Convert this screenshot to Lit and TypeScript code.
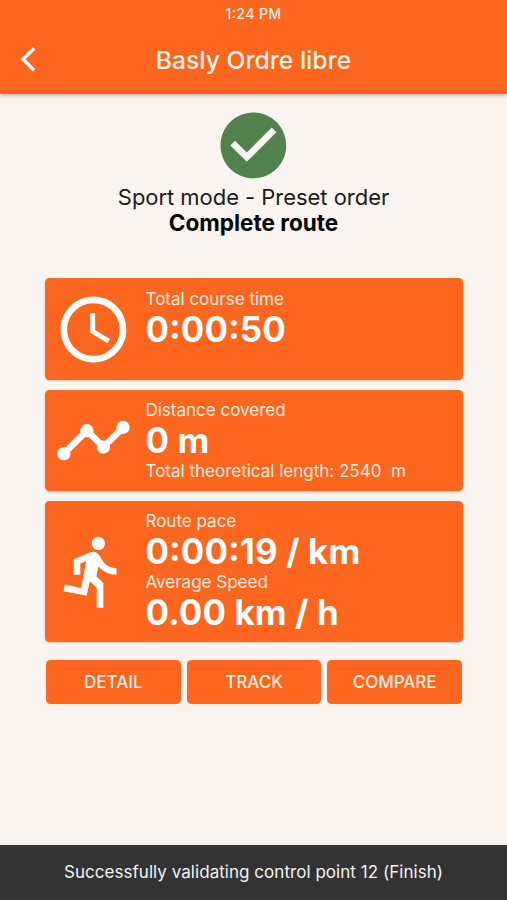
import { LitElement, html, css, svg } from "lit";
import { customElement } from "lit/decorators.js";

const ICONS = {
  back: "M11.67 3.87L9.9 2.1 0 12l9.9 9.9 1.77-1.77L3.54 12z",
  check: "M12 2C6.48 2 2 6.48 2 12s4.48 10 10 10 10-4.48 10-10S17.52 2 12 2zm-2 15l-5-5 1.41-1.41L10 14.17l7.59-7.59L19 8l-9 9z",
  clock: "M11.99 2C6.47 2 2 6.48 2 12s4.47 10 9.99 10C17.52 22 22 17.52 22 12S17.52 2 11.99 2zM12 20c-4.42 0-8-3.58-8-8s3.58-8 8-8 8 3.58 8 8-3.58 8-8 8zM12.5 7H11v6l5.25 3.15.75-1.23-4.5-2.67z",
  timeline: "M23 8c0 1.1-.9 2-2 2-.18 0-.35-.02-.51-.07l-3.56 3.55c.05.16.07.34.07.52 0 1.1-.9 2-2 2s-2-.9-2-2c0-.18.02-.36.07-.52l-2.55-2.55c-.16.05-.34.07-.52.07s-.36-.02-.52-.07l-4.55 4.56c.05.16.07.33.07.51 0 1.1-.9 2-2 2s-2-.9-2-2 .9-2 2-2c.18 0 .35.02.51.07l4.56-4.55C8.02 9.36 8 9.18 8 9c0-1.1.9-2 2-2s2 .9 2 2c0 .18-.02.36-.07.52l2.55 2.55c.16-.05.34-.07.52-.07s.36.02.52.07l3.55-3.56C19.02 8.35 19 8.18 19 8c0-1.1.9-2 2-2s2 .9 2 2z",
  run: "M13.49 5.48c1.1 0 2-.9 2-2s-.9-2-2-2-2 .9-2 2 .9 2 2 2zm-3.6 13.9l1-4.4 2.1 2v6h2v-7.5l-2.1-2 .6-3c1.3 1.5 3.3 2.5 5.5 2.5v-2c-1.9 0-3.5-1-4.3-2.4l-1-1.6c-.4-.6-1-1-1.7-1-.3 0-.5.1-.8.1l-5.2 2.2v4.7h2v-3.4l1.8-.7-1.6 8.1-4.9-1-.4 2 7 1.4z",
};

const icon = (name: keyof typeof ICONS, cls: string) =>
  html`<svg class=${cls} viewBox="0 0 24 24" aria-hidden="true">${svg`<path d=${ICONS[name]} fill="currentColor"></path>`}</svg>`;

@customElement("app-root")
export class AppRoot extends LitElement {
  static styles = css`
    :host {
      display: flex;
      flex-direction: column;
      height: 900px;
      background: #f9f4ef;
      font-family: Inter, "Liberation Sans", sans-serif;
      color: #111;
      overflow: hidden;
    }
    svg { display: block; flex: none; }
    .top {
      height: 94px;
      background: #fd661f;
      color: #fff4e8;
      box-shadow: 0 1px 4px rgba(0, 0, 0, 0.35);
    }
    .status {
      height: 28px;
      line-height: 28px;
      text-align: center;
      font-size: 14px;
      font-weight: 500;
      letter-spacing: 0.4px;
    }
    .bar {
      display: grid;
      grid-template-columns: 60px 1fr 60px;
      align-items: center;
      height: 63px;
    }
    .back {
      width: 28.7px;
      height: 28.7px;
      margin-left: 20.7px;
      color: #fff;
      stroke: #fff;
      stroke-width: 0.4;
      overflow: visible;
    }
    .title { text-align: center; font-size: 24.6px; font-weight: 500; letter-spacing: 0.04px; }
    .summary {
      display: flex;
      flex-direction: column;
      align-items: center;
      padding-top: 12px;
      font-size: 22px;
      line-height: 26px;
    }
    .big-check { width: 78.8px; height: 78.8px; margin: 0 0 -0.8px 0.6px; color: #528150; }
    .done { font-size: 22.5px; font-weight: 700; color: #000; }
    .mode { color: #1c1c1c; letter-spacing: -0.04px; }
    .cards {
      display: flex;
      flex-direction: column;
      gap: 9.7px;
      margin: 42.4px 44px 0 45px;
    }
    .card {
      display: flex;
      align-items: center;
      height: 101.5px;
      border-radius: 4.5px;
      background: #fd661f;
      color: #fff;
      box-shadow: 0 1px 2px rgba(0, 0, 0, 0.2);
    }
    .card.tall { height: 141.5px; }
    .glyph { width: 79px; height: 79px; margin: 0 12.2px 0 9.3px; }
    .body { align-self: flex-start; padding-top: 9.5px; white-space: pre; }
    .label { font-size: 17px; line-height: 22px; color: #fff0e2; }
    .value { font-size: 34.8px; line-height: 39px; font-weight: 700; letter-spacing: 0.14px; }
    .time { font-feature-settings: "case"; }
    .actions {
      display: grid;
      grid-template-columns: repeat(3, 1fr);
      gap: 6px;
      margin: 18.2px 45px 0 46px;
    }
    .btn {
      height: 44px;
      line-height: 45px;
      border-radius: 4.5px;
      text-align: center;
      font-size: 17px;
      font-weight: 500;
      background: #fd661f;
      color: #fff0e2;
    }
    .snack {
      margin-top: auto;
      height: 55px;
      line-height: 55px;
      background: #333;
      color: #f2f2f2;
      text-align: center;
      font-size: 17px;
      letter-spacing: 0.04px;
    }
  `;

  render() {
    return html`
      <header class="top">
        <div class="status"><span class="time">1:24</span> PM</div>
        <div class="bar">${icon("back", "back")}<div class="title">Basly Ordre libre</div></div>
      </header>
      <section class="summary">
        ${icon("check", "big-check")}
        <div class="mode">Sport mode - Preset order</div>
        <div class="done">Complete route</div>
      </section>
      <section class="cards">
        <div class="card">
          ${icon("clock", "glyph")}
          <div class="body"><div class="label">Total course time</div><div class="value"><span class="time">0:00:50</span></div></div>
        </div>
        <div class="card">
          ${icon("timeline", "glyph")}
          <div class="body"><div class="label">Distance covered</div><div class="value">0 m</div><div class="label">Total theoretical length: 2540  m</div></div>
        </div>
        <div class="card tall">
          ${icon("run", "glyph")}
          <div class="body"><div class="label">Route pace</div><div class="value"><span class="time">0:00:19</span> / km</div><div class="label">Average Speed</div><div class="value">0.00 km / h</div></div>
        </div>
      </section>
      <nav class="actions">
        <div class="btn">DETAIL</div>
        <div class="btn">TRACK</div>
        <div class="btn">COMPARE</div>
      </nav>
      <footer class="snack">Successfully validating control point 12 (Finish)</footer>
    `;
  }
}
